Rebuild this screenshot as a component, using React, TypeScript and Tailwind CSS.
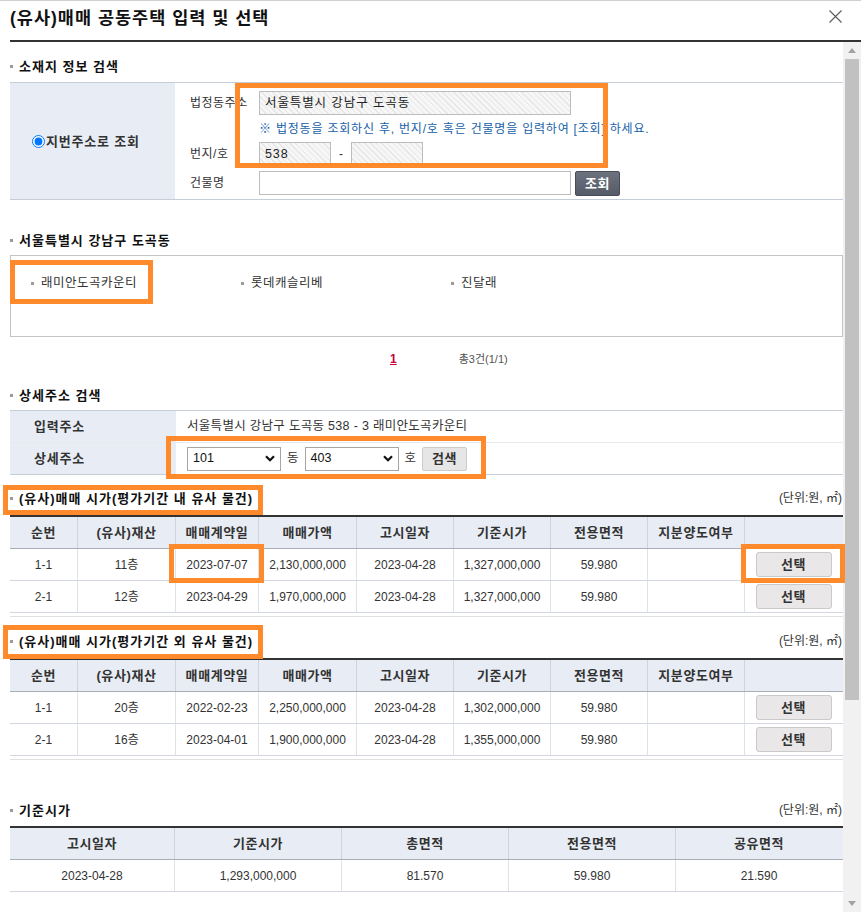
import React from "react";

const COLS1 = "grid grid-cols-[68px_98px_83px_98px_97px_97px_97px_97px_97px]";
const COLS2 = "grid grid-cols-[165px_167px_167px_167px_166px]";

function Heading({ children, unit }: { children: React.ReactNode; unit?: boolean }) {
  return (
    <div className="flex h-[20px] items-center justify-between">
      <div className="flex items-center gap-[6px]">
        <span className="h-[3px] w-[3px] bg-[#9a9a9a]" />
        <span className="text-[13px] font-bold leading-none tracking-[1px] text-[#111]">{children}</span>
      </div>
      {unit && <span className="pr-px text-[12px] leading-none text-[#333]">(단위:원, ㎡)</span>}
    </div>
  );
}

function HatchInput({ w, children }: { w: string; children?: React.ReactNode }) {
  return (
    <div
      className={`flex h-[24px] items-center border border-[#bdbdbd] bg-[repeating-linear-gradient(45deg,#e6e6e6_0px,#e6e6e6_1px,#f6f6f6_1px,#f6f6f6_4px)] pl-[5px] text-[12.5px] leading-none tracking-[0.9px] text-[#222] ${w}`}
    >
      {children}
    </div>
  );
}

function Select({ value, w }: { value: string; w: string }) {
  return (
    <div className={`flex h-[24px] items-center justify-between border border-[#a6a6a6] bg-white pl-[5px] pr-[5px] text-[12.5px] leading-none text-[#111] ${w}`}>
      <span>{value}</span>
      <svg width="10" height="7" viewBox="0 0 10 7">
        <path d="M1 1.3 L5 5.3 L9 1.3" stroke="#111" strokeWidth="2.2" fill="none" />
      </svg>
    </div>
  );
}

function SelectBtn() {
  return (
    <div className="flex h-[25px] w-[76px] items-center justify-center rounded-[3px] border border-[#cacaca] bg-[#e9e7e7] text-[13px] font-bold leading-none tracking-[0.5px] text-[#333]">
      선택
    </div>
  );
}

type Cell = React.ReactNode;

function DataTable({ rows }: { rows: Cell[][] }) {
  const headers = ["순번", "(유사)재산", "매매계약일", "매매가액", "고시일자", "기준시가", "전용면적", "지분양도여부", ""];
  return (
    <div>
      <div className="border-t-2 border-[#333]">
        <div className={`${COLS1} h-[32px] border-b border-[#a8aeb8] bg-[#e8edf5]`}>
          {headers.map((h, i) => (
            <div
              key={i}
              className={`flex items-center justify-center text-[13px] font-bold leading-none tracking-[0.6px] text-[#333] ${i < headers.length - 1 ? "border-r border-[#cdd4de]" : ""}`}
            >
              {h}
            </div>
          ))}
        </div>
        {rows.map((r, ri) => (
          <div key={ri} className={`${COLS1} h-[32px] border-b border-[#d3d8e0]`}>
            {r.map((c, i) => (
              <div
                key={i}
                className={`flex items-center justify-center text-[12px] leading-none text-[#333] ${i < r.length - 1 ? "border-r border-[#dfe3e9]" : ""}`}
              >
                {c}
              </div>
            ))}
          </div>
        ))}
      </div>
      <div className="mt-[3px] h-px bg-[#e0e0e0]" />
    </div>
  );
}

function Scrollbar() {
  return (
    <div className="flex w-[18px] flex-col bg-[#f1f1f1]">
      <div className="flex h-[17px] items-center justify-center">
        <svg width="8" height="5" viewBox="0 0 8 5">
          <path d="M0 5 L4 0 L8 5 Z" fill="#a3a3a3" />
        </svg>
      </div>
      <div className="mx-[2px] h-[641px] bg-[#c1c1c1]" />
      <div className="flex-1" />
      <div className="flex h-[17px] items-center justify-center">
        <svg width="8" height="5" viewBox="0 0 8 5">
          <path d="M0 0 L4 5 L8 0 Z" fill="#a3a3a3" />
        </svg>
      </div>
    </div>
  );
}

function Orange({ cls }: { cls: string }) {
  return <div className={`pointer-events-none absolute border-[5px] border-[#ff8a2b] ${cls}`} />;
}

export default function App() {
  const list = ["래미안도곡카운티", "롯데캐슬리베", "진달래"];
  const rows1: Cell[][] = [
    ["1-1", "11층", "2023-07-07", "2,130,000,000", "2023-04-28", "1,327,000,000", "59.980", "", <SelectBtn />],
    ["2-1", "12층", "2023-04-29", "1,970,000,000", "2023-04-28", "1,327,000,000", "59.980", "", <SelectBtn />],
  ];
  const rows2: Cell[][] = [
    ["1-1", "20층", "2022-02-23", "2,250,000,000", "2023-04-28", "1,302,000,000", "59.980", "", <SelectBtn />],
    ["2-1", "16층", "2023-04-01", "1,900,000,000", "2023-04-28", "1,355,000,000", "59.980", "", <SelectBtn />],
  ];
  const baseHead = ["고시일자", "기준시가", "총면적", "전용면적", "공유면적"];
  const baseRow = ["2023-04-28", "1,293,000,000", "81.570", "59.980", "21.590"];

  return (
    <div className="relative h-[912px] w-[861px] overflow-hidden bg-white font-['Liberation_Sans','Noto_Sans_CJK_KR',sans-serif] text-[#333]">
      <div className="h-px bg-[#cfcfcf]" />
      <div className="flex h-[39px] items-start justify-between pl-[10px] pr-[19px]">
        <h1 className="mt-[9px] text-[17.5px] font-bold leading-none tracking-[1px] text-[#111]">(유사)매매 공동주택 입력 및 선택</h1>
        <svg className="mt-[9px]" width="13" height="13" viewBox="0 0 13 13">
          <path d="M0.5 0.5 L12.5 12.5 M12.5 0.5 L0.5 12.5" stroke="#5a5a5a" strokeWidth="1.1" />
        </svg>
      </div>
      <div className="ml-[10px] h-[2px] bg-[#333]" />

      <div className="flex h-[870px]">
        <div className="w-[843px] pl-[10px]">
          <div className="mt-[14px]">
            <Heading>소재지 정보 검색</Heading>
          </div>
          <div className="mt-[6px] flex border-y border-[#c5ced8]">
            <div className="flex w-[166px] items-center border-r border-white bg-[#e8edf5] pl-[22px]">
              <input type="radio" defaultChecked className="m-0 h-[13px] w-[13px]" />
              <span className="ml-[1px] text-[13px] font-bold leading-none tracking-[0.8px] text-[#333]">지번주소로 조회</span>
            </div>
            <div className="flex-1 pb-[4px] pl-[14px] pt-[8px] text-[12px] leading-none">
              <div className="flex h-[24px] items-center">
                <span className="w-[69px] tracking-[0.5px]">법정동주소</span>
                <HatchInput w="w-[312px]">서울특별시 강남구 도곡동</HatchInput>
              </div>
              <div className="flex h-[27px] items-center pl-[69px] tracking-[0.8px] text-[#1560a8]">
                ※ 법정동을 조회하신 후, 번지/호 혹은 건물명을 입력하여 [조회] 하세요.
              </div>
              <div className="flex h-[24px] items-center">
                <span className="w-[69px] tracking-[0.5px]">번지/호</span>
                <HatchInput w="w-[72px]">538</HatchInput>
                <span className="w-[20px] text-center">-</span>
                <HatchInput w="w-[72px]" />
              </div>
              <div className="mt-[5px] flex h-[24px] items-center">
                <span className="w-[69px] tracking-[0.5px]">건물명</span>
                <div className="h-[24px] w-[312px] border border-[#bdbdbd] bg-white" />
                <div className="ml-[4px] flex h-[25px] w-[45px] items-center justify-center rounded-[2px] border border-[#474d57] bg-[linear-gradient(#6c737e,#555c68)] text-[13px] font-bold tracking-[0.5px] text-white">
                  조회
                </div>
              </div>
            </div>
          </div>

          <div className="mt-[30px]">
            <Heading>서울특별시 강남구 도곡동</Heading>
          </div>
          <div className="mt-[5px] h-[82px] border border-[#c4c4c4] pl-[20px] pt-[19px]">
            <div className="flex">
              {list.map((n) => (
                <div key={n} className="flex h-[16px] w-[210px] items-center gap-[7px]">
                  <span className="h-[3px] w-[3px] bg-[#9a9a9a]" />
                  <span className="text-[12.5px] leading-none tracking-[0.5px] text-[#333]">{n}</span>
                </div>
              ))}
            </div>
          </div>
          <div className="flex h-[44px] items-center pl-[380px]">
            <span className="text-[12px] font-bold leading-none text-[#c8003c] underline">1</span>
            <span className="ml-[62px] text-[11px] leading-none text-[#555]">총3건(1/1)</span>
          </div>

          <div className="mt-[4px]">
            <Heading>상세주소 검색</Heading>
          </div>
          <div className="mt-[5px] border-y border-[#c5ced8]">
            <div className="flex h-[32px] border-b border-[#e6e9ee]">
              <div className="flex w-[166px] items-center bg-[#e8edf5] pl-[24px] text-[13px] font-bold leading-none tracking-[0.8px]">입력주소</div>
              <div className="flex flex-1 items-center pl-[11px] text-[12.5px] leading-none tracking-[0.3px]">
                서울특별시 강남구 도곡동 538 - 3 래미안도곡카운티
              </div>
            </div>
            <div className="flex h-[31px]">
              <div className="flex w-[166px] items-center bg-[#e8edf5] pl-[24px] text-[13px] font-bold leading-none tracking-[0.8px]">상세주소</div>
              <div className="flex flex-1 items-center pl-[11px] text-[12.5px] leading-none">
                <Select value="101" w="w-[94px]" />
                <span className="mx-[6px]">동</span>
                <Select value="403" w="w-[94px]" />
                <span className="mx-[6px]">호</span>
                <div className="flex h-[24px] w-[45px] items-center justify-center rounded-[2px] border border-[#cccccc] bg-[#e6e6e6] text-[13px] font-bold tracking-[0.5px] text-[#333]">
                  검색
                </div>
              </div>
            </div>
          </div>

          <div className="mt-[13px]">
            <Heading unit>(유사)매매 시가(평가기간 내 유사 물건)</Heading>
          </div>
          <div className="mt-[7px]">
            <DataTable rows={rows1} />
          </div>

          <div className="mt-[14px]">
            <Heading unit>(유사)매매 시가(평가기간 외 유사 물건)</Heading>
          </div>
          <div className="mt-[7px]">
            <DataTable rows={rows2} />
          </div>

          <div className="mt-[40px]">
            <Heading unit>기준시가</Heading>
          </div>
          <div className="mt-[6px] border-t-2 border-[#333]">
            <div className={`${COLS2} h-[32px] border-b border-[#a8aeb8] bg-[#e8edf5]`}>
              {baseHead.map((h, i) => (
                <div
                  key={h}
                  className={`flex items-center justify-center text-[13px] font-bold leading-none tracking-[0.6px] text-[#333] ${i < baseHead.length - 1 ? "border-r border-[#cdd4de]" : ""}`}
                >
                  {h}
                </div>
              ))}
            </div>
            <div className={`${COLS2} h-[32px] border-b border-[#d3d8e0]`}>
              {baseRow.map((c, i) => (
                <div
                  key={i}
                  className={`flex items-center justify-center text-[12px] leading-none text-[#333] ${i < baseRow.length - 1 ? "border-r border-[#dfe3e9]" : ""}`}
                >
                  {c}
                </div>
              ))}
            </div>
          </div>
        </div>
        <Scrollbar />
      </div>

      <Orange cls="left-[235px] top-[83px] h-[85px] w-[373px]" />
      <Orange cls="left-[10px] top-[260px] h-[44px] w-[143px]" />
      <Orange cls="left-[166px] top-[436px] h-[43px] w-[320px]" />
      <Orange cls="left-[3px] top-[485px] h-[30px] w-[260px]" />
      <Orange cls="left-[169px] top-[544px] h-[39px] w-[95px]" />
      <Orange cls="left-[741px] top-[544px] h-[39px] w-[104px]" />
      <Orange cls="left-[3px] top-[625px] h-[34px] w-[260px]" />
    </div>
  );
}
